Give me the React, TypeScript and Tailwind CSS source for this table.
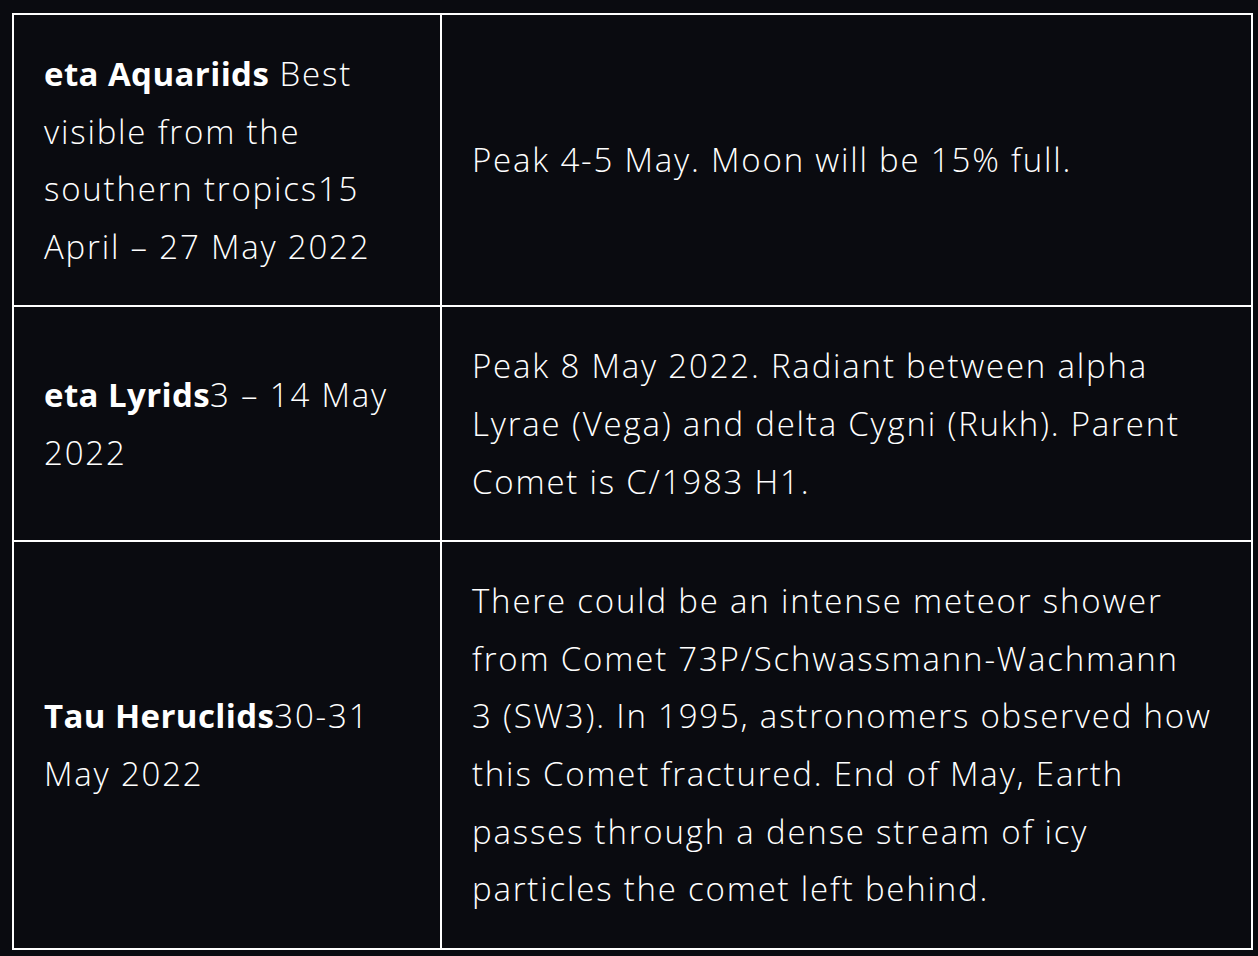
const rows = [
  {
    name: "eta Aquariids",
    dates: " Best visible from the southern tropics15 April – 27 May 2022",
    info: "Peak 4-5 May. Moon will be 15% full.",
  },
  {
    name: "eta Lyrids",
    dates: "3 – 14 May 2022",
    info: "Peak 8 May 2022. Radiant between alpha Lyrae (Vega) and delta Cygni (Rukh). Parent Comet is C/1983 H1.",
  },
  {
    name: "Tau Heruclids",
    dates: "30-31 May 2022",
    info: "There could be an intense meteor shower from Comet 73P/Schwassmann-Wachmann 3\u00a0(SW3). In 1995, astronomers observed how this Comet fractured. End of May, Earth passes through a dense stream of icy particles the comet left behind.",
  },
]

export default function App() {
  return (
    <div className="min-h-screen bg-[#0a0b10] pt-[13px] pl-[12px] font-['Open_Sans',sans-serif] text-[33px] leading-[57.6px] tracking-[1.8px] font-light text-white">
      <table className="w-[1241px] table-fixed border-collapse">
        <colgroup>
          <col className="w-[428px]" />
          <col />
        </colgroup>
        <tbody>
          {rows.map((row) => (
            <tr key={row.name}>
              <td className="border-2 border-white px-[30px] py-[30px] align-middle">
                <strong className="font-bold tracking-[0.4px]">{row.name}</strong>
                {row.dates}
              </td>
              <td className="border-2 border-white px-[30px] py-[30px] align-middle">{row.info}</td>
            </tr>
          ))}
        </tbody>
      </table>
    </div>
  )
}
